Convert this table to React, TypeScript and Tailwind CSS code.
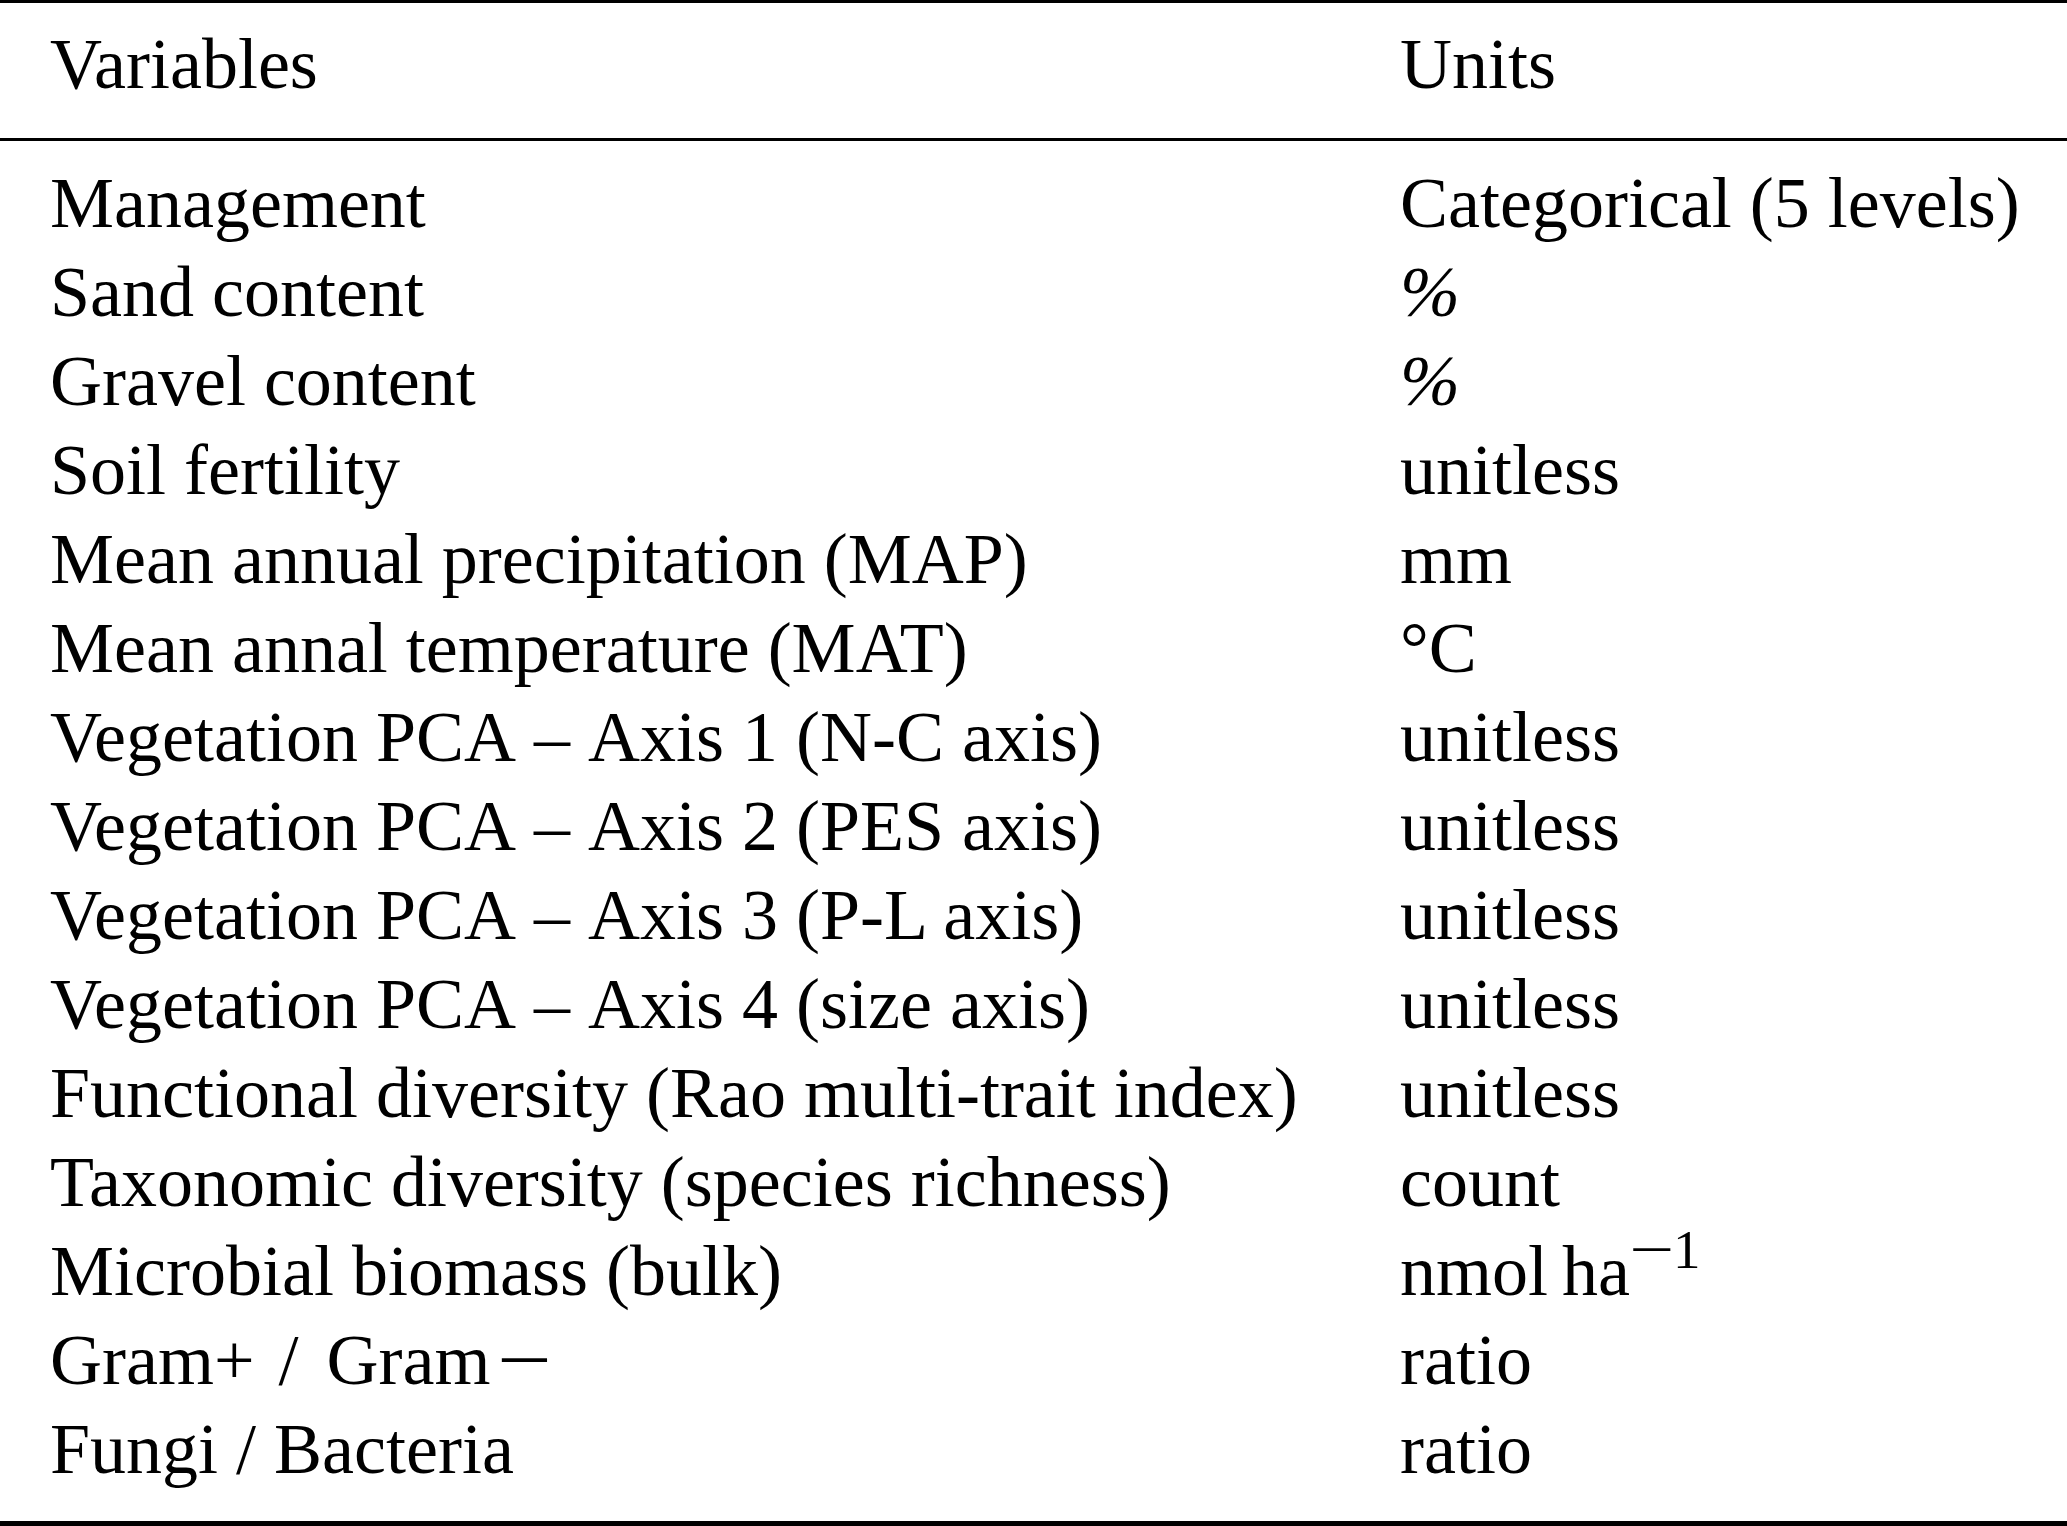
import React from "react";

const Dash = () => <span className="mx-[4px]">–</span>;

const rows: { v: React.ReactNode; u: React.ReactNode }[] = [
  { v: "Management", u: "Categorical (5 levels)" },
  { v: "Sand content", u: <span className="italic">%</span> },
  { v: "Gravel content", u: <span className="italic">%</span> },
  { v: "Soil fertility", u: "unitless" },
  { v: "Mean annual precipitation (MAP)", u: "mm" },
  { v: "Mean annal temperature (MAT)", u: "°C" },
  { v: <>Vegetation PCA <Dash /> Axis 1 (N-C axis)</>, u: "unitless" },
  { v: <>Vegetation PCA <Dash /> Axis 2 (PES axis)</>, u: "unitless" },
  { v: <>Vegetation PCA <Dash /> Axis 3 (P-L axis)</>, u: "unitless" },
  { v: <>Vegetation PCA <Dash /> Axis 4 (size axis)</>, u: "unitless" },
  { v: "Functional diversity (Rao multi-trait index)", u: "unitless" },
  { v: "Taxonomic diversity (species richness)", u: "count" },
  {
    v: "Microbial biomass (bulk)",
    u: (
      <span>
        nmol<span className="inline-block w-[14px]"></span>ha
        <span className="relative top-[-27px] ml-[6px] text-[55px] leading-none">
          <span className="inline-block scale-x-[1.45] mr-[6px]">−</span>1
        </span>
      </span>
    ),
  },
  {
    v: (
      <span>
        {"Gram+ "}
        <span className="ml-[6px] mr-[10px]">/</span>
        {" Gram"}
        <span className="inline-block ml-[8px] w-[52px] text-center">
          <span className="inline-block scale-x-[1.35]">−</span>
        </span>
      </span>
    ),
    u: "ratio",
  },
  { v: "Fungi / Bacteria", u: "ratio" },
];

export default function App() {
  return (
    <div className="w-[2067px] h-[1526px] bg-white text-black font-['Liberation_Serif',serif] text-[72px] leading-[89px] overflow-hidden">
      <div className="h-[3px] bg-black" />
      <div className="grid grid-cols-[1350px_1fr] pl-[50px] pt-[17px] pb-[29px]">
        <div className="whitespace-nowrap">Variables</div>
        <div className="whitespace-nowrap">Units</div>
      </div>
      <div className="h-[3px] bg-black" />
      <div className="grid grid-cols-[1350px_1fr] pl-[50px] pt-[18px]">
        {rows.map((r, i) => (
          <React.Fragment key={i}>
            <div className="whitespace-nowrap h-[89px]">{r.v}</div>
            <div className="whitespace-nowrap h-[89px]">{r.u}</div>
          </React.Fragment>
        ))}
      </div>
      <div className="mt-[27px] h-[5px] bg-black" />
    </div>
  );
}
